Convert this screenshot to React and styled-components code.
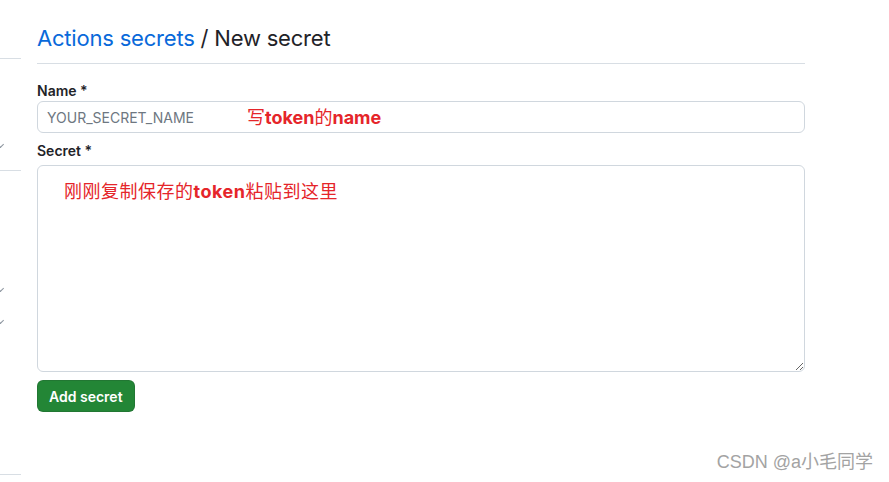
import React from "react";
import styled, { createGlobalStyle } from "styled-components";

const Global = createGlobalStyle`
  body {
    margin: 0;
    background: #ffffff;
    font-family: Inter, "Liberation Sans", "Noto Sans CJK SC", sans-serif;
    color: #1f2328;
  }
`;

const Page = styled.div`
  position: relative;
  display: flex;
  gap: 16px;
  width: 889px;
  height: 482px;
  overflow: hidden;
`;

const Sidebar = styled.div`
  width: 21px;
  flex-shrink: 0;
  display: flex;
  flex-direction: column;
`;

const SideRule = styled.div`
  height: 1px;
  background: #d8dee4;
  margin-top: ${(p) => p.top}px;
`;

const SideMark = styled.div`
  margin-top: ${(p) => p.top}px;
  width: 4px;
  height: 4px;
  border-right: 1px solid #8c959f;
  border-bottom: 1px solid #8c959f;
  transform: rotate(45deg);
  margin-left: -2px;
`;

const Main = styled.div`
  width: 768px;
  padding-top: 23px;
`;

const Header = styled.div`
  padding-bottom: 10px;
  border-bottom: 1px solid #d8dee4;
`;

const Title = styled.h1`
  margin: 0;
  font-size: 22px;
  font-weight: 400;
  line-height: 30px;
  letter-spacing: -0.2px;
`;

const Crumb = styled.span`
  color: #0969da;
`;

const Group = styled.div`
  position: relative;
  margin-top: ${(p) => p.top}px;
`;

const Label = styled.label`
  display: block;
  font-size: 14px;
  font-weight: 600;
  line-height: 20px;
  margin-bottom: ${(p) => p.gap}px;
`;

const Input = styled.input`
  box-sizing: border-box;
  width: 100%;
  height: 32px;
  padding: 0 9px;
  font-family: inherit;
  font-size: 14px;
  color: #1f2328;
  border: 1px solid #d0d7de;
  border-radius: 6px;
  background: #ffffff;
  outline: none;
  &::placeholder {
    color: #6e7781;
  }
`;

const Textarea = styled.textarea`
  box-sizing: border-box;
  display: block;
  width: 100%;
  height: 207px;
  border: 1px solid #d0d7de;
  border-radius: 6px;
  background: #ffffff;
  outline: none;
  resize: vertical;
`;

const Note = styled.span`
  position: absolute;
  left: ${(p) => p.left}px;
  top: ${(p) => p.top}px;
  font-size: 18px;
  line-height: 22px;
  letter-spacing: ${(p) => p.spacing || 0}px;
  color: #e5252a;
  pointer-events: none;
  white-space: nowrap;
  & b {
    font-weight: 700;
  }
`;

const Button = styled.button`
  margin-top: 8px;
  height: 32px;
  padding: 0 11px;
  font-family: inherit;
  font-size: 14px;
  font-weight: 600;
  color: #ffffff;
  background: #238636;
  border: 1px solid rgba(31, 35, 40, 0.15);
  border-radius: 6px;
`;

const Watermark = styled.div`
  position: absolute;
  right: 16px;
  bottom: 9px;
  font-family: "Liberation Sans", "Noto Sans CJK SC", sans-serif;
  font-size: 18px;
  color: #a3a3a3;
  text-shadow: 0 0 1px #ffffff;
`;

export default function App() {
  return (
    <Page>
      <Global />
      <Sidebar>
        <SideRule top={58} />
        <SideMark top={83} />
        <SideRule top={23} />
        <SideMark top={115} />
        <SideMark top={27} />
        <SideRule top={151} />
      </Sidebar>
      <Main>
        <Header>
          <Title>
            <Crumb>Actions secrets</Crumb> / New secret
          </Title>
        </Header>
        <Group top={17}>
          <Label gap={0}>Name *</Label>
          <Input placeholder="YOUR_SECRET_NAME" />
          <Note left={210} top={26}>
            写<b>token</b>的<b>name</b>
          </Note>
        </Group>
        <Group top={8}>
          <Label gap={4}>Secret *</Label>
          <Textarea />
          <Note left={27} top={40} spacing={0.5}>
            刚刚复制保存的<b>token</b>粘贴到这里
          </Note>
        </Group>
        <Button>Add secret</Button>
      </Main>
      <Watermark>CSDN @a小毛同学</Watermark>
    </Page>
  );
}
